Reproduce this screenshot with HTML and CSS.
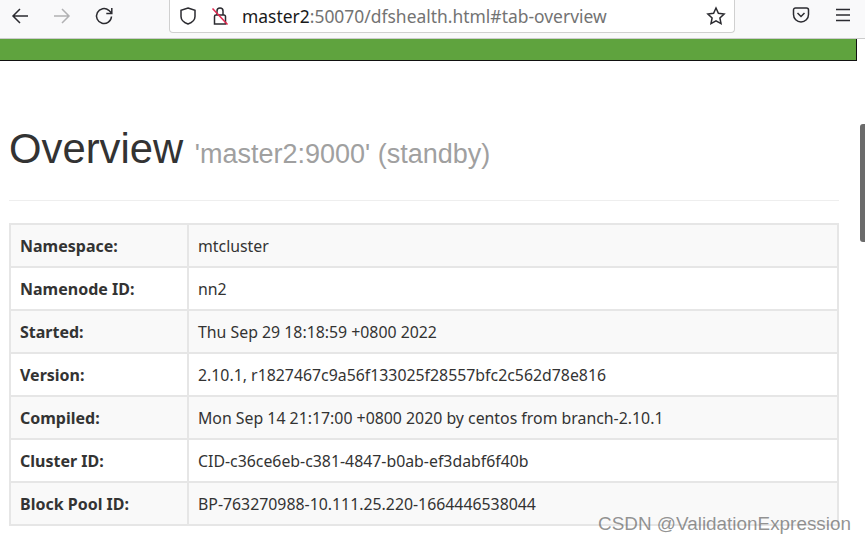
FILE: index.html
```html
<!DOCTYPE html>
<html lang="en">
  <head>
    <meta charset="UTF-8" />
    <title>Namenode information</title>
    <link rel="stylesheet" href="styles.css">
  </head>
  <body>
    <div class="toolbar">
      <div class="nav-buttons">
        <svg class="icon" viewBox="0 0 20 20"><path d="M18 10H3.500M10 3L3 10l7 7" /></svg>
        <svg class="icon icon-disabled" viewBox="0 0 20 20"><path d="M2 10h14.500M10 3l7 7-7 7" /></svg>
        <svg class="icon" viewBox="0 0 20 20"><path d="M17.500 10.500A7.500 7.500 0 1 1 14.800 4.300L17.500 7M17.800 2V7.500H12.300" /></svg>
      </div>
      <div class="url-bar">
        <svg class="icon" viewBox="0 0 20 20"><path d="M10 2l7 2.200v6.300c0 3.500-3 6-7 7.500-4-1.500-7-4-7-7.500V4.200z" /></svg>
        <svg class="icon icon-lock" viewBox="0 0 20 20">
          <path d="M4.500 10.500a1.500 1.500 0 0 1 1.500-1.500h8a1.500 1.500 0 0 1 1.500 1.500V18h-11zM7 9V5a3 3 0 0 1 6 0v4" />
          <path class="lock-slash" d="M2.500 2.500l15 16" />
        </svg>
        <span class="url"><span class="url-host">master2</span>:50070/dfshealth.html#tab-overview</span>
        <svg class="icon icon-star" viewBox="0 0 20 20"><path d="M10 2l2.400 5.300 5.700.7-4.200 3.900 1.100 5.700L10 14.800l-5 2.800 1.100-5.700L1.900 8l5.700-.7z" /></svg>
      </div>
      <div class="tool-buttons">
        <svg class="icon" viewBox="0 0 20 20">
          <path d="M4.500 3h11A2 2 0 0 1 17.500 5v4.500a7.500 7.500 0 0 1-15 0V5a2 2 0 0 1 2-2z" />
          <path d="M6.500 8l3.500 3.500L13.500 8" />
        </svg>
        <svg class="icon" viewBox="0 0 20 20"><path d="M3 4.500h14M3 10h14M3 15.500h14" /></svg>
      </div>
    </div>

    <div class="viewport">
      <div class="navbar"></div>
      <div class="main-container">
        <div class="page-header">
          <h1 class="page-title">Overview <small class="page-subtitle">'master2:9000' (standby)</small></h1>
        </div>
        <table class="info-table">
          <tr><th>Namespace:</th><td>mtcluster</td></tr>
          <tr><th>Namenode ID:</th><td>nn2</td></tr>
          <tr><th>Started:</th><td>Thu Sep 29 18:18:59 +0800 2022</td></tr>
          <tr><th>Version:</th><td>2.10.1, r1827467c9a56f133025f28557bfc2c562d78e816</td></tr>
          <tr><th>Compiled:</th><td>Mon Sep 14 21:17:00 +0800 2020 by centos from branch-2.10.1</td></tr>
          <tr><th>Cluster ID:</th><td>CID-c36ce6eb-c381-4847-b0ab-ef3dabf6f40b</td></tr>
          <tr><th>Block Pool ID:</th><td>BP-763270988-10.111.25.220-1664446538044</td></tr>
        </table>
      </div>
      <div class="scrollbar-thumb"></div>
    </div>

    <div class="watermark">CSDN @ValidationExpression</div>
  </body>
</html>
```

FILE: styles.css
```css
* {
  box-sizing: border-box;
  margin: 0;
  padding: 0;
}

html,
body {
  height: 544px;
  overflow: hidden;
}

body {
  background: #fff;
  color: #333;
  font-family: 'Noto Sans', sans-serif;
  font-size: 16px;
  position: relative;
}

.toolbar {
  align-items: flex-start;
  background: #f9f9fa;
  border-bottom: 1px solid #ccc;
  display: flex;
  height: 39px;
}

.icon {
  fill: none;
  flex: none;
  height: 20px;
  stroke: #2b2b30;
  stroke-width: 1.5;
  width: 20px;
}

.icon-disabled {
  stroke: #b1b1b3;
}

.lock-slash {
  stroke: #e22850;
}

.nav-buttons {
  display: flex;
  gap: 22px;
  padding: 6px 0 0 10px;
  width: 169px;
}

.url-bar {
  align-items: center;
  background: #fff;
  border: 1px solid #d0d0d0;
  border-top: 0;
  border-radius: 0 0 4px 4px;
  display: flex;
  height: 33px;
  padding: 0 8px 0 8px;
  width: 566px;
}

.icon-lock {
  margin-left: 12px;
}

.url {
  color: #737373;
  flex: 1;
  font-size: 17.45px;
  margin-left: 12px;
}

.url-host {
  color: #1a1a1a;
}

.tool-buttons {
  display: flex;
  gap: 22px;
  padding: 5px 0 0 56px;
}

.viewport {
  height: 505px;
  position: relative;
}

.navbar {
  background: #5fa33e;
  border-bottom: 1px solid #111;
  border-right: 1px solid #111;
  height: 22px;
  width: 857px;
}

.main-container {
  padding: 0 26px 0 9px;
}

.page-header {
  border-bottom: 1px solid #eee;
  height: 140px;
  padding-top: 64px;
}

.page-title {
  font-family: 'Liberation Sans', sans-serif;
  font-size: 41.8px;
  font-weight: 400;
  line-height: 48px;
}

.page-subtitle {
  color: #a0a0a0;
  font-size: 27px;
}

.info-table {
  border-collapse: collapse;
  margin: 22px 0 0 0;
  width: 830px;
}

.info-table th,
.info-table td {
  border: 2px solid #e6e6e6;
  font-size: 15.85px;
  font-weight: 400;
  height: 43px;
  padding: 0 9px;
  text-align: left;
}

.info-table th {
  font-size: 16px;
  font-weight: 700;
  width: 178px;
}

.info-table tr:nth-child(odd) {
  background: #f9f9f9;
}

.scrollbar-thumb {
  background: #6b6b6b;
  border-radius: 3px 0 0 3px;
  height: 118px;
  position: absolute;
  right: 0;
  top: 85px;
  width: 5px;
}

.watermark {
  bottom: 9px;
  color: rgba(100, 100, 100, 0.7);
  font-family: 'Liberation Sans', sans-serif;
  font-size: 18.9px;
  position: absolute;
  right: 14px;
}
```
